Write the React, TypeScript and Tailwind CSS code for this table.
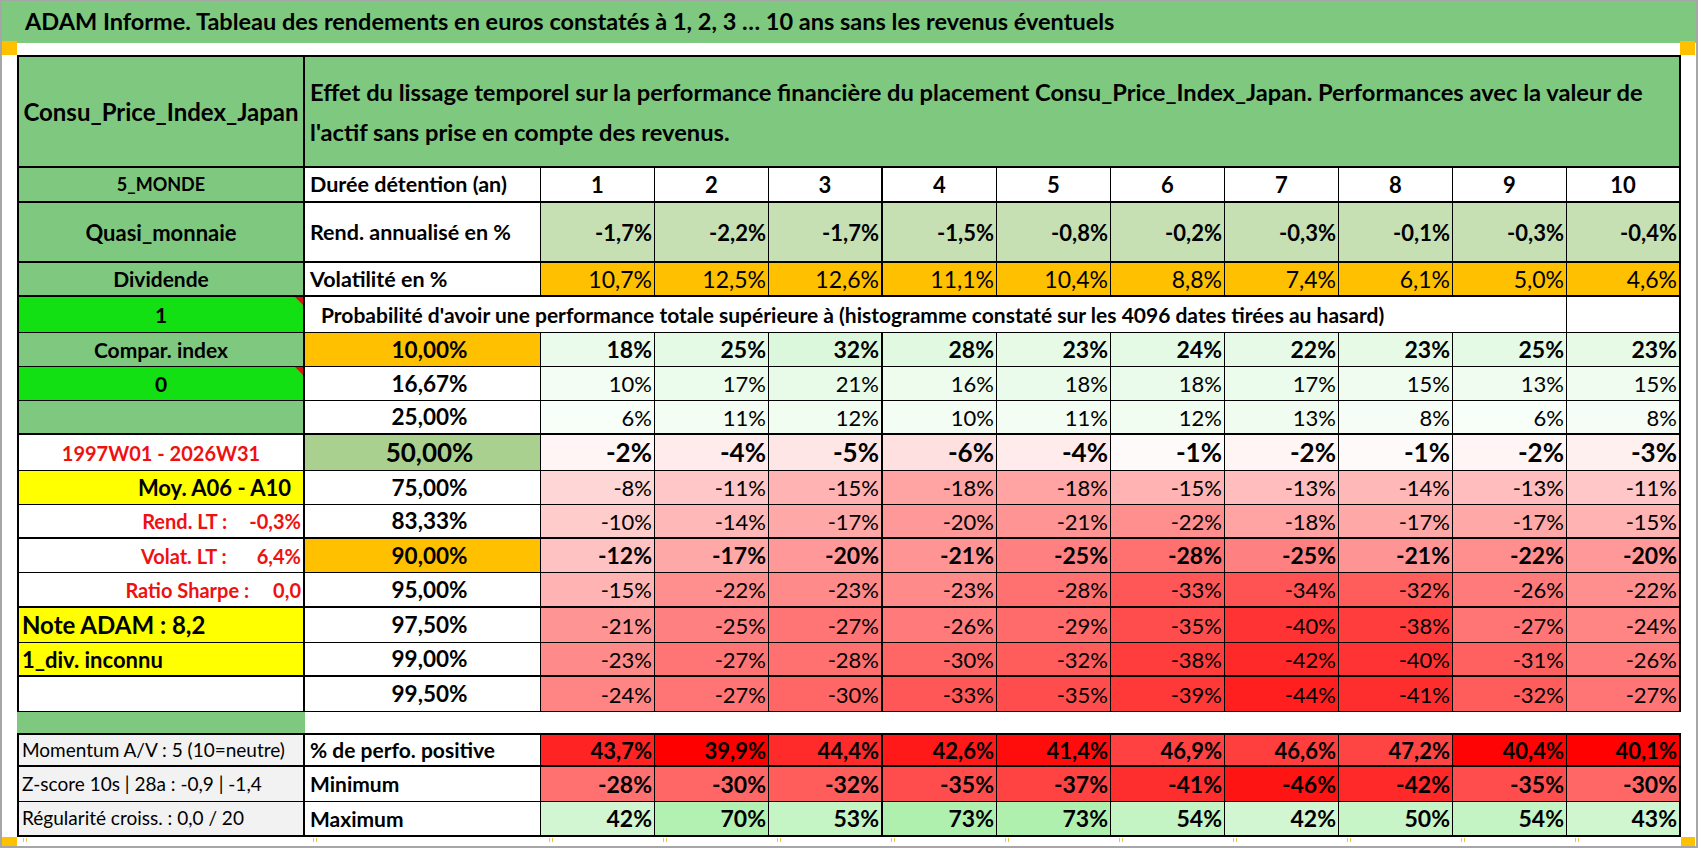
import React from "react";

type Align = "left" | "center" | "right";

type LeftSpec = {
  text?: React.ReactNode;
  bg: string;
  align: Align;
  tone?: string;
  pad?: string;
  size?: string;
  flag?: boolean;
};

type PctRow = {
  h: string;
  b: string;
  left: LeftSpec;
  label: string;
  labelBg?: string;
  labelSize?: string;
  vals: number[];
  bold?: boolean;
  size: string;
};

const GREEN = "bg-[#7fc87f]";
const LIME = "bg-[#12e012]";
const ORANGE = "bg-[#ffc000]";
const YELLOW = "bg-[#ffff00]";
const RED_TEXT = "text-[#ee1111]";

const alignClass: Record<Align, string> = {
  left: "justify-start",
  center: "justify-center",
  right: "justify-end",
};

const YEARS = [1, 2, 3, 4, 5, 6, 7, 8, 9, 10];
const REND = ["-1,7%", "-2,2%", "-1,7%", "-1,5%", "-0,8%", "-0,2%", "-0,3%", "-0,1%", "-0,3%", "-0,4%"];
const VOLAT = ["10,7%", "12,5%", "12,6%", "11,1%", "10,4%", "8,8%", "7,4%", "6,1%", "5,0%", "4,6%"];
const PERF = [43.7, 39.9, 44.4, 42.6, 41.4, 46.9, 46.6, 47.2, 40.4, 40.1];
const MINI = [-28, -30, -32, -35, -37, -41, -46, -42, -35, -30];
const MAXI = [42, 70, 53, 73, 73, 54, 42, 50, 54, 43];

const PCT_ROWS: PctRow[] = [
  {
    h: "h-[34px]",
    b: "border-b",
    left: { text: "Compar. index", bg: GREEN, align: "center" },
    label: "10,00%",
    labelBg: ORANGE,
    vals: [18, 25, 32, 28, 23, 24, 22, 23, 25, 23],
    bold: true,
    size: "text-[23px]",
  },
  {
    h: "h-[34px]",
    b: "border-b",
    left: { text: "0", bg: LIME, align: "center", flag: true },
    label: "16,67%",
    vals: [10, 17, 21, 16, 18, 18, 17, 15, 13, 15],
    size: "text-[22px]",
  },
  {
    h: "h-[34px]",
    b: "border-b-2",
    left: { bg: GREEN, align: "center" },
    label: "25,00%",
    vals: [6, 11, 12, 10, 11, 12, 13, 8, 6, 8],
    size: "text-[22px]",
  },
  {
    h: "h-[36px]",
    b: "border-b",
    left: { text: "1997W01 - 2026W31", bg: "bg-white", align: "center", tone: RED_TEXT, size: "text-[20px]" },
    label: "50,00%",
    labelBg: "bg-[#a9d08e]",
    labelSize: "text-[26px]",
    vals: [-2, -4, -5, -6, -4, -1, -2, -1, -2, -3],
    bold: true,
    size: "text-[26px]",
  },
  {
    h: "h-[34px]",
    b: "border-b",
    left: { text: "Moy. A06 - A10", bg: YELLOW, align: "right", pad: "pr-[12px]", size: "text-[22px]" },
    label: "75,00%",
    vals: [-8, -11, -15, -18, -18, -15, -13, -14, -13, -11],
    size: "text-[22px]",
  },
  {
    h: "h-[34px]",
    b: "border-b-2",
    left: {
      text: (
        <>
          <span>Rend. LT :</span>
          <span className="ml-[22px]">-0,3%</span>
        </>
      ),
      bg: "bg-white",
      align: "right",
      tone: RED_TEXT,
      pad: "pr-[2px]",
      size: "text-[20px]",
    },
    label: "83,33%",
    vals: [-10, -14, -17, -20, -21, -22, -18, -17, -17, -15],
    size: "text-[22px]",
  },
  {
    h: "h-[34px]",
    b: "border-b",
    left: {
      text: (
        <>
          <span>Volat. LT :</span>
          <span className="ml-[30px]">6,4%</span>
        </>
      ),
      bg: "bg-white",
      align: "right",
      tone: RED_TEXT,
      pad: "pr-[2px]",
      size: "text-[20px]",
    },
    label: "90,00%",
    labelBg: ORANGE,
    vals: [-12, -17, -20, -21, -25, -28, -25, -21, -22, -20],
    bold: true,
    size: "text-[23px]",
  },
  {
    h: "h-[35px]",
    b: "border-b-2",
    left: {
      text: (
        <>
          <span>Ratio Sharpe :</span>
          <span className="ml-[24px]">0,0</span>
        </>
      ),
      bg: "bg-white",
      align: "right",
      tone: RED_TEXT,
      pad: "pr-[2px]",
      size: "text-[20px]",
    },
    label: "95,00%",
    vals: [-15, -22, -23, -23, -28, -33, -34, -32, -26, -22],
    size: "text-[22px]",
  },
  {
    h: "h-[35px]",
    b: "border-b",
    left: { text: "Note ADAM : 8,2", bg: YELLOW, align: "left", pad: "pl-[3px]", size: "text-[24px]" },
    label: "97,50%",
    vals: [-21, -25, -27, -26, -29, -35, -40, -38, -27, -24],
    size: "text-[22px]",
  },
  {
    h: "h-[34px]",
    b: "border-b-2",
    left: { text: "1_div. inconnu", bg: YELLOW, align: "left", pad: "pl-[3px]", size: "text-[22px]" },
    label: "99,00%",
    vals: [-23, -27, -28, -30, -32, -38, -42, -40, -31, -26],
    size: "text-[22px]",
  },
  {
    h: "h-[35px]",
    b: "border-b",
    left: { bg: "bg-white", align: "left" },
    label: "99,50%",
    vals: [-24, -27, -30, -33, -35, -39, -44, -41, -32, -27],
    size: "text-[22px]",
  },
];

// white -> red below zero, white -> pale green above
function shade(v: number) {
  if (v < 0) {
    const t = Math.min(1, -v / 50);
    const g = Math.round(255 * (1 - t));
    return `rgb(255, ${g}, ${g})`;
  }
  const t = Math.min(1, v / 73);
  return `rgb(${Math.round(255 - 80 * t)}, ${Math.round(255 - 15 * t)}, ${Math.round(255 - 80 * t)})`;
}

function perfShade(v: number) {
  const t = Math.max(0, (v - 40) / 7.2);
  const g = Math.round(68 * t);
  return `rgb(255, ${g}, ${g})`;
}

// heavier rule after year 3 and at the table's right edge
const colBorder = (i: number) => (i === 2 || i === 9 ? "border-r-2" : "border-r");

function LeftCell({ spec, b }: { spec: LeftSpec; b: string }) {
  return (
    <div
      className={`relative flex w-[288px] shrink-0 items-center whitespace-nowrap border-l-2 border-r-2 border-black font-bold ${spec.size ?? "text-[21px]"} ${b} ${spec.bg} ${alignClass[spec.align]} ${spec.tone ?? ""} ${spec.pad ?? ""}`}
    >
      {spec.text}
      {spec.flag ? (
        <span className="absolute right-0 top-0 h-0 w-0 border-l-[8px] border-t-[8px] border-l-transparent border-t-[#e01010]" />
      ) : null}
    </div>
  );
}

function SecondCell({ children, b, className = "" }: { children?: React.ReactNode; b: string; className?: string }) {
  return (
    <div className={`flex w-[236px] shrink-0 items-center whitespace-nowrap border-r border-black ${b} ${className}`}>
      {children}
    </div>
  );
}

function ValueCell({
  i,
  b,
  className = "",
  bg,
  children,
}: {
  i: number;
  b: string;
  className?: string;
  bg?: string;
  children: React.ReactNode;
}) {
  return (
    <div
      className={`flex w-[114px] shrink-0 items-center justify-end whitespace-nowrap border-black pr-[2px] ${colBorder(i)} ${b} ${className}`}
      style={bg ? { backgroundColor: bg } : undefined}
    >
      {children}
    </div>
  );
}

function BottomLeft({ children, b }: { children: React.ReactNode; b: string }) {
  return (
    <div
      className={`flex w-[288px] shrink-0 items-center whitespace-nowrap border-l-2 border-r-2 border-black bg-[#f2f2f2] pl-[3px] text-[19px] ${b}`}
    >
      {children}
    </div>
  );
}

function Ticks() {
  return (
    <span className="flex gap-[2px] pt-[1px]">
      <span className="h-[4px] w-[1px] bg-[#e8c84a]" />
      <span className="h-[4px] w-[1px] bg-[#e8c84a]" />
    </span>
  );
}

export default function App() {
  return (
    <div className="h-[848px] w-[1698px] overflow-hidden border-x-2 border-b-2 border-t border-[#a6a6a6] bg-white font-[family-name:Lato,sans-serif] text-black">
      <div className="flex h-[42px] items-center bg-[#7fc87f] pl-[23px] text-[23.5px] font-bold">
        ADAM Informe. Tableau des rendements en euros constatés à 1, 2, 3 … 10 ans sans les revenus éventuels
      </div>

      <div className="flex h-[12px] justify-between">
        <div className="-mt-[2px] h-[14px] w-[15px] bg-[#ffc000]" />
        <div className="-mt-[2px] mr-px h-[14px] w-[15px] bg-[#ffc000]" />
      </div>

      <div className="ml-[15px] w-[1664px]">
        {/* title row */}
        <div className="flex h-[113px]">
          <div className={`flex w-[288px] shrink-0 items-center justify-center whitespace-nowrap border-2 border-black ${GREEN} text-[24px] font-bold`}>
            Consu_Price_Index_Japan
          </div>
          <div className={`flex w-[1376px] shrink-0 items-center border-y-2 border-r-2 border-black ${GREEN} pl-[5px] text-[23.7px] font-bold leading-[40px]`}>
            <p className="whitespace-nowrap">
              Effet du lissage temporel sur la performance financière du placement Consu_Price_Index_Japan. Performances avec la valeur de
              <br />
              l'actif sans prise en compte des revenus.
            </p>
          </div>
        </div>

        {/* holding period */}
        <div className="flex h-[35px]">
          <LeftCell spec={{ text: "5_MONDE", bg: GREEN, align: "center", size: "text-[18px]" }} b="border-b-2" />
          <SecondCell b="border-b-2" className="pl-[5px] text-[21.5px] font-bold">
            Durée détention (an)
          </SecondCell>
          {YEARS.map((y, i) => (
            <ValueCell key={y} i={i} b="border-b-2" className="!justify-center !pr-0 text-[22px] font-bold">
              {y}
            </ValueCell>
          ))}
        </div>

        {/* annualised return */}
        <div className="flex h-[60px]">
          <LeftCell spec={{ text: "Quasi_monnaie", bg: GREEN, align: "center", size: "text-[22px]" }} b="border-b-2" />
          <SecondCell b="border-b-2" className="pl-[5px] text-[21.5px] font-bold">
            Rend. annualisé en %
          </SecondCell>
          {REND.map((v, i) => (
            <ValueCell key={i} i={i} b="border-b-2" className="bg-[#c6e0b4] text-[22px] font-bold">
              {v}
            </ValueCell>
          ))}
        </div>

        {/* volatility */}
        <div className="flex h-[34px]">
          <LeftCell spec={{ text: "Dividende", bg: GREEN, align: "center" }} b="border-b-2" />
          <SecondCell b="border-b-2" className="pl-[5px] text-[21.5px] font-bold">
            Volatilité en %
          </SecondCell>
          {VOLAT.map((v, i) => (
            <ValueCell key={i} i={i} b="border-b-2" className={`${ORANGE} text-[23px]`}>
              {v}
            </ValueCell>
          ))}
        </div>

        {/* probability caption */}
        <div className="flex h-[36px]">
          <LeftCell spec={{ text: "1", bg: LIME, align: "center", flag: true }} b="border-b" />
          <div className="flex w-[1262px] shrink-0 items-center whitespace-nowrap border-b border-r border-black pl-[16px] text-[21px] font-bold">
            Probabilité d'avoir une performance totale supérieure à (histogramme constaté sur les 4096 dates tirées au hasard)
          </div>
          <div className="w-[114px] shrink-0 border-b border-r-2 border-black" />
        </div>

        {PCT_ROWS.map((row) => (
          <div key={row.label} className={`flex ${row.h}`}>
            <LeftCell spec={row.left} b={row.b} />
            <SecondCell b={row.b} className={`justify-center pl-[14px] font-bold ${row.labelBg ?? ""} ${row.labelSize ?? "text-[22.5px]"}`}>
              {row.label}
            </SecondCell>
            {row.vals.map((v, i) => (
              <ValueCell key={i} i={i} b={row.b} bg={shade(v)} className={`${row.size} ${row.bold ? "font-bold" : ""}`}>
                {v}%
              </ValueCell>
            ))}
          </div>
        ))}

        {/* spacer strip */}
        <div className="flex h-[21px]">
          <div className={`w-[288px] shrink-0 ${GREEN}`} />
        </div>

        {/* summary rows */}
        <div className="flex h-[34px]">
          <BottomLeft b="border-y-2">Momentum A/V : 5 (10=neutre)</BottomLeft>
          <SecondCell b="border-y-2" className="pl-[5px] text-[21px] font-bold">
            % de perfo. positive
          </SecondCell>
          {PERF.map((v, i) => (
            <ValueCell key={i} i={i} b="border-y-2" bg={perfShade(v)} className="text-[22px] font-bold">
              {v.toFixed(1).replace(".", ",")}%
            </ValueCell>
          ))}
        </div>
        <div className="flex h-[35px]">
          <BottomLeft b="border-b">Z-score 10s | 28a : -0,9 | -1,4</BottomLeft>
          <SecondCell b="border-b" className="pl-[5px] text-[21px] font-bold">
            Minimum
          </SecondCell>
          {MINI.map((v, i) => (
            <ValueCell key={i} i={i} b="border-b" bg={shade(v)} className="text-[23px] font-bold">
              {v}%
            </ValueCell>
          ))}
        </div>
        <div className="flex h-[35px]">
          <BottomLeft b="border-b-2">Régularité croiss. : 0,0 / 20</BottomLeft>
          <SecondCell b="border-b-2" className="pl-[5px] text-[21px] font-bold">
            Maximum
          </SecondCell>
          {MAXI.map((v, i) => (
            <ValueCell key={i} i={i} b="border-b-2" bg={shade(v)} className="text-[23px] font-bold">
              {v}%
            </ValueCell>
          ))}
        </div>
      </div>

      {/* bottom margin with sheet markers */}
      <div className="flex h-[9px]">
        <div className="h-[9px] w-[15px] shrink-0 bg-[#ffc000]" />
        <div className="flex w-[288px] shrink-0 pl-[6px]">
          <Ticks />
        </div>
        <div className="flex w-[236px] shrink-0 pl-[8px]">
          <Ticks />
        </div>
        {YEARS.map((y) => (
          <div key={y} className="flex w-[114px] shrink-0 pl-[8px]">
            <Ticks />
          </div>
        ))}
        <div className="ml-auto mr-px h-[9px] w-[15px] bg-[#ffc000]" />
      </div>
    </div>
  );
}
